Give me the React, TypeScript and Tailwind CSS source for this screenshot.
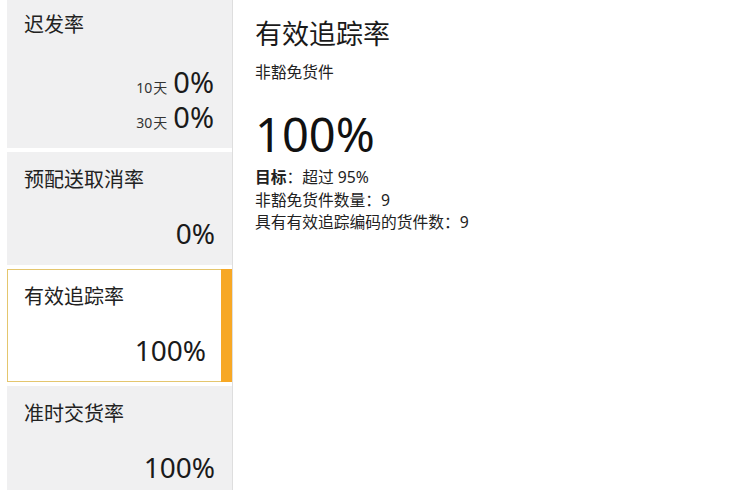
import React from "react";

const font = { fontFamily: '"Noto Sans", "Noto Sans CJK SC", sans-serif' };

function Card({ title, value }: { title: string; value: string }) {
  return (
    <div className="h-[113px] shrink-0 bg-[#f0f0f1] flex flex-col justify-between px-[17px] pt-[14px] pb-[18px]">
      <div className="text-[20px] leading-[28px] text-[#222]">{title}</div>
      <div className="text-right text-[28px] leading-[28px] text-[#1a1a1a]">{value}</div>
    </div>
  );
}

function DayRow({ days }: { days: string }) {
  return (
    <div className="text-right h-[35px] leading-[35px] whitespace-nowrap">
      <span className="text-[14px] text-[#333]">{days}</span>
      <span className="ml-[1px] mr-[6px] text-[14px] text-[#333]">天</span>
      <span className="text-[29px]">0%</span>
    </div>
  );
}

export default function App() {
  return (
    <div className="w-[743px] h-[490px] overflow-hidden flex bg-white text-[#1a1a1a]" style={font}>
      <div className="w-[233px] shrink-0 pl-[7px] border-r border-[#dedede] flex flex-col gap-[4px] overflow-hidden">
        <div className="h-[148px] shrink-0 bg-[#f0f0f1] flex flex-col justify-between pl-[17px] pr-[18px] pt-[11px] pb-[14px]">
          <div className="text-[20px] leading-[28px] text-[#222]">迟发率</div>
          <div className="flex flex-col">
            <DayRow days="10" />
            <DayRow days="30" />
          </div>
        </div>
        <Card title="预配送取消率" value="0%" />
        <div className="h-[113px] shrink-0 flex">
          <div className="flex-1 bg-white border border-r-0 border-[#e4c66e] flex flex-col justify-between pl-[16px] pr-[15px] pt-[13px] pb-[17px]">
            <div className="text-[20px] leading-[28px] text-[#222]">有效追踪率</div>
            <div className="text-right text-[28px] leading-[28px] text-[#1a1a1a]">100%</div>
          </div>
          <div className="w-[11px] bg-[#f7a825]" />
        </div>
        <Card title="准时交货率" value="100%" />
      </div>
      <div className="flex-1 pl-[22px] pt-[16px]">
        <div className="text-[27px] leading-[35px] text-[#1a1a1a]">有效追踪率</div>
        <div className="mt-[10px] text-[15.75px] leading-[22px] text-[#222]">非豁免货件</div>
        <div className="mt-[28px] text-[47px] leading-[46px] text-[#111]">100%</div>
        <div className="mt-[9px] text-[15.75px] leading-[22.5px] text-[#222]">
          <div>
            <span className="font-bold">目标</span>：超过 95%
          </div>
          <div>非豁免货件数量：9</div>
          <div>具有有效追踪编码的货件数：9</div>
        </div>
      </div>
    </div>
  );
}
